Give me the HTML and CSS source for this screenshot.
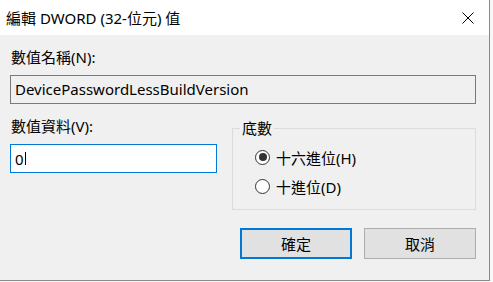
FILE: index.html
```html
<!DOCTYPE html>
<html lang="zh-Hant">
<head>
  <meta charset="UTF-8" />
  <title>編輯 DWORD (32-位元) 值</title>
  <link rel="stylesheet" href="styles.css">
</head>
<body>

  <div class="window">
    <div class="titlebar">
      <span class="title">編輯 DWORD (32-位元) 值</span>
      <span class="close">
        <svg width="12" height="12" viewBox="0 0 12 12">
          <path d="M0.5 0.5 L11.5 11.5 M11.5 0.5 L0.5 11.5" stroke="#000" stroke-width="1" fill="none"/>
        </svg>
      </span>
    </div>

    <div class="content">
      <div class="label">數值名稱(N):</div>
      <div class="namebox">DevicePasswordLessBuildVersion</div>

      <div class="row">
        <div class="data-col">
          <div class="label">數值資料(V):</div>
          <div class="databox">0<span class="caret"></span></div>
        </div>

        <fieldset class="group">
          <legend>底數</legend>
          <div class="options">
            <label class="radio-row"><input type="radio" name="base" checked> 十六進位(H)</label>
            <label class="radio-row"><input type="radio" name="base"> 十進位(D)</label>
          </div>
        </fieldset>
      </div>

      <div class="buttons">
        <button class="btn default">確定</button>
        <button class="btn">取消</button>
      </div>
    </div>
  </div>

</body>
</html>
```

FILE: styles.css
```css
body {
  margin: 0;
  width: 493px;
  height: 282px;
  background: #f7f7f7;
  font-family: "Noto Sans", "Noto Sans CJK TC", sans-serif;
  font-size: 15px;
  color: #000;
  overflow: hidden;
}

.window {
  width: 489px;
  height: 280px;
  background: #f0f0f0;
  border-right: 1px solid #8a8a8a;
  border-bottom: 1px solid #8a8a8a;
}

.titlebar {
  height: 35px;
  background: #fff;
  display: flex;
  align-items: center;
  justify-content: space-between;
  padding-left: 6px;
}

.title {
  line-height: 18px;
}

.close {
  width: 42px;
  height: 35px;
  display: flex;
  align-items: center;
  justify-content: center;
}

.content {
  padding: 13px 13px 0 10px;
}

.label {
  line-height: 18px;
  padding-left: 1px;
}

.namebox {
  margin-top: 9px;
  height: 29px;
  box-sizing: border-box;
  border: 1px solid #7a7a7a;
  padding-left: 4px;
  line-height: 26px;
}

.row {
  display: flex;
  align-items: flex-start;
  gap: 15px;
  margin-top: 13px;
}

.data-col {
  width: 207px;
}

.databox {
  margin-top: 9px;
  height: 29px;
  box-sizing: border-box;
  border: 1px solid #0078d7;
  background: #fff;
  padding-left: 4px;
  line-height: 26px;
  display: flex;
  align-items: center;
}

.caret {
  display: inline-block;
  width: 1px;
  height: 13px;
  background: #000;
  margin-left: 1px;
}

.group {
  margin: 4px 0 0 0;
  width: 244px;
  height: 89px;
  box-sizing: border-box;
  border: 1px solid #dcdcdc;
  padding: 0;
}

.group legend {
  margin-left: 7px;
  padding: 0 2px;
  line-height: 14px;
}

.options {
  padding: 12px 0 0 22px;
}

.radio-row {
  display: flex;
  align-items: center;
  gap: 6px;
  height: 20px;
  margin-bottom: 9px;
}

.radio-row input {
  appearance: none;
  margin: 0;
  width: 15px;
  height: 15px;
  border: 1px solid #333;
  border-radius: 50%;
  background: #fff;
  display: grid;
  place-items: center;
}

.radio-row input:checked::after {
  content: "";
  width: 8px;
  height: 8px;
  border-radius: 50%;
  background: #333;
}

.buttons {
  display: flex;
  justify-content: flex-end;
  gap: 12px;
  margin-top: 18px;
}

.btn {
  width: 112px;
  height: 31px;
  box-sizing: border-box;
  background: #e1e1e1;
  border: 1px solid #adadad;
  font-family: inherit;
  font-size: 15px;
  color: #000;
  padding: 0;
}

.btn.default {
  border: 2px solid #0078d7;
}
```
